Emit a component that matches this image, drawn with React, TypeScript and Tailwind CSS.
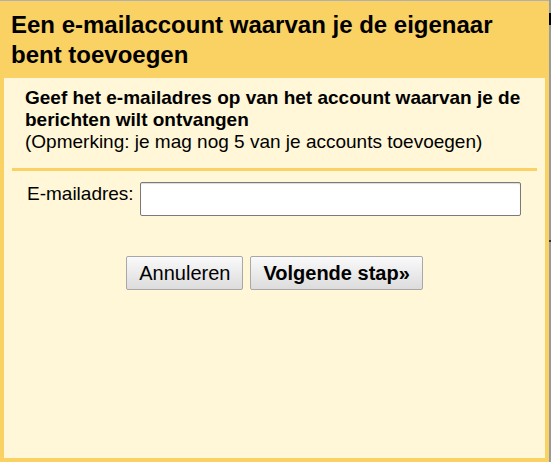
export default function App() {
  return (
    <div className="flex w-[551px] h-[462px] overflow-hidden font-['Liberation_Sans',Arial,sans-serif] text-black">
      <div className="w-[549px] flex flex-col bg-[#fad163] border-t border-[#b0b0b0] px-1 pb-1">
        <h1 className="px-[7px] pt-[9px] pb-[8px] text-[24px] font-bold leading-[30px]">
          Een e-mailaccount waarvan je de eigenaar bent toevoegen
        </h1>
        <div className="flex-1 bg-[#fff7d7] px-2 pt-[9px]">
          <div className="px-[13px] pb-[15px] text-[19px] leading-[22px] border-b-[3px] border-[#fad163]">
            <p className="font-bold">
              Geef het e-mailadres op van het account waarvan je de berichten wilt ontvangen
            </p>
            <p>(Opmerking: je mag nog 5 van je accounts toevoegen)</p>
          </div>
          <div className="flex items-center pt-[11px] pl-[15px]">
            <label className="text-[19px] mr-[6px] -mt-[9px]">E-mailadres:</label>
            <input
              type="text"
              className="w-[381px] h-[34px] bg-white border border-[#7a7a7a] rounded-[2px] shadow-[inset_0_1px_1px_rgba(0,0,0,0.15)] outline-none"
            />
          </div>
          <div className="flex justify-center gap-[7px] pt-[40px]">
            <button className="h-[34px] px-[12px] text-[20px] border border-[#a8a8a8] rounded-[2px] bg-gradient-to-b from-[#fafafa] to-[#dcdcdc]">
              Annuleren
            </button>
            <button className="h-[34px] px-[12px] text-[20px] font-bold border border-[#a8a8a8] rounded-[2px] bg-gradient-to-b from-[#fafafa] to-[#dcdcdc]">
              Volgende stap»
            </button>
          </div>
        </div>
      </div>
      <div className="w-[2px] flex flex-col bg-[#9a9a9a]">
        <div className="h-[13px]" />
        <div className="h-[12px] bg-black" />
        <div className="h-[215px]" />
        <div className="h-[2px] bg-[#333]" />
      </div>
    </div>
  );
}
